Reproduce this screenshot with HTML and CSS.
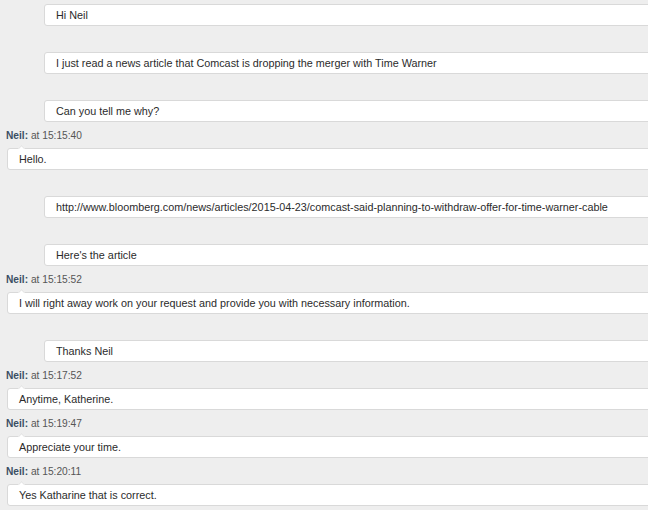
FILE: index.html
```html
<!DOCTYPE html>
<html lang="en">
<head>
  <meta charset="UTF-8">
  <title>Chat transcript</title>
  <link rel="stylesheet" href="styles.css">
</head>
<body>
  <div class="chat">
    <div class="msg visitor first">
      <div class="bubble">Hi Neil</div>
    </div>
    <div class="msg visitor">
      <div class="bubble">I just read a news article that Comcast is dropping the merger with Time Warner</div>
    </div>
    <div class="msg visitor">
      <div class="bubble">Can you tell me why?</div>
    </div>
    <div class="msg agent">
      <div class="meta"><span class="name">Neil:</span> at 15:15:40</div>
      <div class="bubble">Hello.</div>
    </div>
    <div class="msg visitor">
      <div class="bubble">http://www.bloomberg.com/news/articles/2015-04-23/comcast-said-planning-to-withdraw-offer-for-time-warner-cable</div>
    </div>
    <div class="msg visitor">
      <div class="bubble">Here's the article</div>
    </div>
    <div class="msg agent">
      <div class="meta"><span class="name">Neil:</span> at 15:15:52</div>
      <div class="bubble">I will right away work on your request and provide you with necessary information.</div>
    </div>
    <div class="msg visitor">
      <div class="bubble">Thanks Neil</div>
    </div>
    <div class="msg agent">
      <div class="meta"><span class="name">Neil:</span> at 15:17:52</div>
      <div class="bubble">Anytime, Katherine.</div>
    </div>
    <div class="msg agent">
      <div class="meta"><span class="name">Neil:</span> at 15:19:47</div>
      <div class="bubble">Appreciate your time.</div>
    </div>
    <div class="msg agent">
      <div class="meta"><span class="name">Neil:</span> at 15:20:11</div>
      <div class="bubble">Yes Katharine that is correct.</div>
    </div>
  </div>
</body>
</html>
```

FILE: styles.css
```css
html, body {
  margin: 0;
  padding: 0;
  overflow: hidden;
}

body {
  background-color: #eeeeee;
  font-family: "Liberation Sans", Arial, sans-serif;
  color: #333333;
}

.chat {
  width: 650px;
  padding: 0 0 0 7px;
}

.msg {
  padding-top: 26px;
}

.msg.first {
  padding-top: 4px;
}

.msg.visitor {
  padding-left: 37px;
}

.msg.agent {
  padding-top: 0;
}

.meta {
  margin: 8px 0 6px -1px;
  font-size: 10.2px;
  line-height: 12px;
  color: #555555;
}

.name {
  font-weight: bold;
  color: #3b4f63;
}

.bubble {
  position: relative;
  background-color: #ffffff;
  border: 1px solid #d9d9d9;
  border-radius: 3px;
  padding: 4px 11px;
  font-size: 10.8px;
  line-height: 12px;
  height: 12px;
  white-space: nowrap;
  color: #2b2b2b;
}

.agent .bubble::before {
  content: "";
  position: absolute;
  top: -3px;
  left: 11px;
  width: 4px;
  height: 4px;
  background-color: #ffffff;
  border-left: 1px solid #e4e4e4;
  border-top: 1px solid #e4e4e4;
  transform: rotate(45deg);
}
```
